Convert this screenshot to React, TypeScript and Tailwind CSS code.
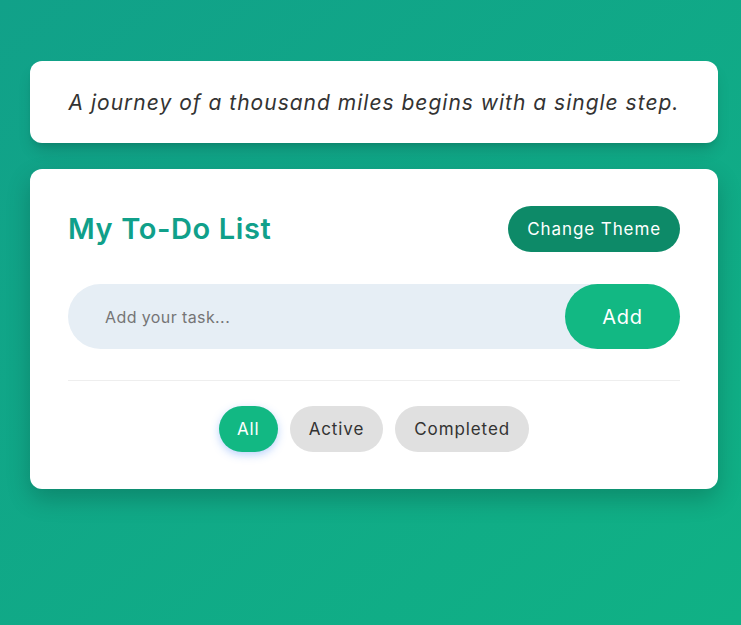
import React, { useState } from "react";

const filters = ["All", "Active", "Completed"];

export default function App() {
  const [filter, setFilter] = useState("All");
  const [task, setTask] = useState("");

  return (
    <div className="min-h-screen bg-gradient-to-br from-[#11a189] to-[#10b185] pl-[30px] pt-[61px] font-['Inter','Noto_Sans',sans-serif]">
      <div className="w-[688px] flex flex-col gap-[26px]">
        <div className="bg-white rounded-xl h-[82px] flex items-center justify-center shadow-lg shadow-black/15">
          <p className="italic text-[21px] text-[#333] tracking-[1px] pt-[1px]">
            A journey of a thousand miles begins with a single step.
          </p>
        </div>

        <div className="bg-white rounded-xl px-[38px] pt-[37px] pb-[37px] shadow-[0_10px_25px_rgba(0,0,0,0.2)]">
          <div className="flex items-center justify-between">
            <h1 className="text-[29px] font-semibold text-[#10a08a] tracking-[0.6px]">
              My To-Do List
            </h1>
            <button className="h-[46px] px-[19px] pt-[1px] rounded-full bg-[#0d8a68] text-white text-[17px] tracking-[0.9px]">
              Change Theme
            </button>
          </div>

          <div className="mt-[32px] flex h-[65px] rounded-full bg-[#e6eef5]">
            <input
              value={task}
              onChange={(e) => setTask(e.target.value)}
              placeholder="Add your task..."
              className="flex-1 bg-transparent pl-[37px] text-[16px] tracking-[0.4px] text-[#333] placeholder:text-[#757575] outline-none"
            />
            <button className="w-[115px] rounded-full bg-[#12b883] text-white text-[20px] tracking-[0.7px]">
              Add
            </button>
          </div>

          <div className="mt-[31px] border-t border-[#eeeeee]" />

          <div className="mt-[25px] flex justify-center gap-[12px]">
            {filters.map((f) => (
              <button
                key={f}
                onClick={() => setFilter(f)}
                className={
                  f === filter
                    ? "h-[46px] px-[18px] pt-[1px] rounded-full bg-[#12b883] text-white text-[17px] tracking-[0.9px] shadow-[0_3px_8px_rgba(59,130,246,0.35)]"
                    : "h-[46px] px-[19px] pt-[1px] rounded-full bg-[#e0e0e0] text-[#333] text-[17px] tracking-[0.9px]"
                }
              >
                {f}
              </button>
            ))}
          </div>
        </div>
      </div>
    </div>
  );
}
